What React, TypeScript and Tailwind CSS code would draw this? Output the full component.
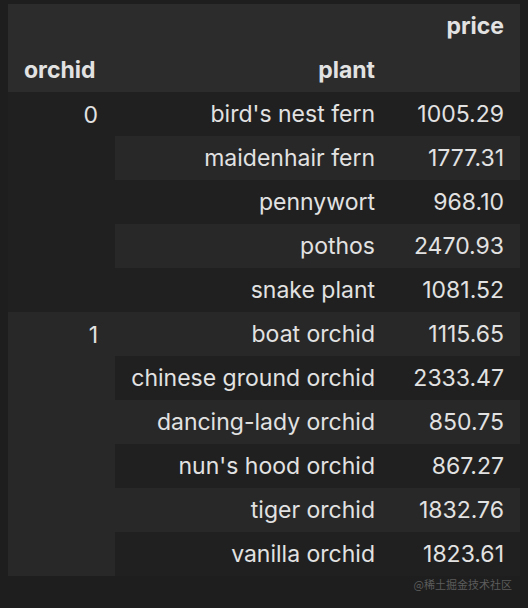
const rows: { idx?: string; span?: number; plant: string; price: string }[] = [
  { idx: "0", span: 5, plant: "bird's nest fern", price: "1005.29" },
  { plant: "maidenhair fern", price: "1777.31" },
  { plant: "pennywort", price: "968.10" },
  { plant: "pothos", price: "2470.93" },
  { plant: "snake plant", price: "1081.52" },
  { idx: "1", span: 6, plant: "boat orchid", price: "1115.65" },
  { plant: "chinese ground orchid", price: "2333.47" },
  { plant: "dancing-lady orchid", price: "850.75" },
  { plant: "nun's hood orchid", price: "867.27" },
  { plant: "tiger orchid", price: "1832.76" },
  { plant: "vanilla orchid", price: "1823.61" },
];

export default function App() {
  return (
    <div
      className="relative h-[608px] w-[528px] bg-[#1e1e1e] px-2 pt-1 text-[#e2e2e2]"
      style={{ fontFamily: "Inter, 'Noto Sans', sans-serif" }}
    >
      <table className="w-[512px] table-fixed border-collapse text-[23px]">
        <colgroup>
          <col className="w-[107px]" />
          <col className="w-[276px]" />
          <col className="w-[129px]" />
        </colgroup>
        <thead className="bg-[#2c2c2c] font-bold">
          <tr className="h-[44px]">
            <th></th>
            <th></th>
            <th className="px-4 text-right">price</th>
          </tr>
          <tr className="h-[44px]">
            <th className="px-4 text-left">orchid</th>
            <th className="px-4 text-right">plant</th>
            <th></th>
          </tr>
        </thead>
        <tbody>
          {rows.map((r, i) => (
            <tr key={r.plant} className={i % 2 === 1 ? "h-[44px] bg-[#282828]" : "h-[44px] bg-[#202020]"}>
              {r.idx && (
                <td rowSpan={r.span} className="pl-4 pr-[17px] pt-[6px] text-right align-top">
                  {r.idx}
                </td>
              )}
              <td className="px-4 text-right">{r.plant}</td>
              <td className="px-4 text-right">{r.price}</td>
            </tr>
          ))}
        </tbody>
      </table>
      <div
        className="absolute bottom-[16px] right-[16px] text-[11px] text-[#5c5c5c]"
        style={{ fontFamily: "'Noto Sans CJK SC', sans-serif" }}
      >
        @稀土掘金技术社区
      </div>
    </div>
  );
}
